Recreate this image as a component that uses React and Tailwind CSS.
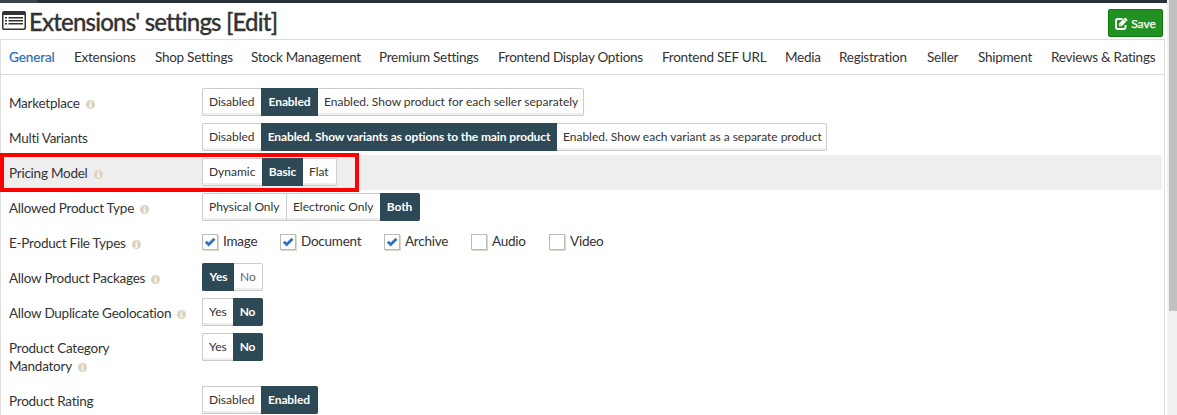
import React from 'react';

const tabs = [
  ['General', 'w-[65px]'],
  ['Extensions', 'w-[81px]'],
  ['Shop Settings', 'w-[96px]'],
  ['Stock Management', 'w-[128px]'],
  ['Premium Settings', 'w-[119px]'],
  ['Frontend Display Options', 'w-[164px]'],
  ['Frontend SEF URL', 'w-[123px]'],
  ['Media', 'w-[54px]'],
  ['Registration', 'w-[88px]'],
  ['Seller', 'w-[51px]'],
  ['Shipment', 'w-[73px]'],
  ['Reviews & Ratings', 'w-[106px]'],
];

const rows = [
  { label: 'Marketplace', info: true, options: [['Disabled', 'w-[59px]'], ['Enabled', 'w-[57px]', true], ['Enabled. Show product for each seller separately', 'w-[266px]']] },
  { label: 'Multi Variants', options: [['Disabled', 'w-[59px]'], ['Enabled. Show variants as options to the main product', 'w-[296px]', true], ['Enabled. Show each variant as a separate product', 'w-[270px]']] },
  { label: 'Pricing Model', info: true, marked: true, options: [['Dynamic', 'w-[60px]'], ['Basic', 'w-[41px]', true], ['Flat', 'w-[34px]']] },
  { label: 'Allowed Product Type', info: true, options: [['Physical Only', 'w-[85px]'], ['Electronic Only', 'w-[93px]'], ['Both', 'w-[40px]', true]] },
  { label: 'E-Product File Types', info: true, checks: [['Image', true, 'w-[78px]'], ['Document', true, 'w-[104px]'], ['Archive', true, 'w-[87px]'], ['Audio', false, 'w-[78px]'], ['Video', false, 'w-[78px]']] },
  { label: 'Allow Product Packages', info: true, options: [['Yes', 'w-[32px]', true], ['No', 'w-[29px]', false, 'text-[#666]']] },
  { label: 'Allow Duplicate Geolocation', info: true, options: [['Yes', 'w-[31px]'], ['No', 'w-[30px]', true]] },
  { label: 'Product Category Mandatory', info: true, tall: true, options: [['Yes', 'w-[31px]'], ['No', 'w-[30px]', true]] },
  { label: 'Product Rating', options: [['Disabled', 'w-[59px]'], ['Enabled', 'w-[57px]', true]] },
];

function ListIcon() {
  return (
    <svg className="h-[19px] w-6 shrink-0" viewBox="0 0 24 19" fill="#333">
      <path fillRule="evenodd" d="M2 0H22Q24 0 24 2V17Q24 19 22 19H2Q0 19 0 17V2Q0 0 2 0ZM1.5 4V16.5Q1.5 17.5 2.5 17.5H21.5Q22.5 17.5 22.5 16.5V4Z" />
      <path d="M3 6h2v1.500H3zM3 9h2v1.500H3zM3 12h2v1.500H3zM6.500 6H21v1.500H6.500zM6.500 9H21v1.500H6.500zM6.500 12H21v1.500H6.500z" />
    </svg>
  );
}

function InfoIcon() {
  return (
    <svg className="mb-[-1px] ml-[6px] inline h-[9px] w-[9px] align-baseline" viewBox="0 0 9 9">
      <circle cx="4.500" cy="4.500" r="4.500" fill="#dcd2bd" />
      <path d="M3.800 1.300h1.500v1.400H3.800zM3.200 3.500h2.100v2.900h.6v1H3.200v-1h.6V4.500h-.6z" fill="#fff" />
    </svg>
  );
}

function EditIcon() {
  return (
    <svg className="h-[13px] w-[13px]" viewBox="0 0 13 13" fill="none" stroke="#fff">
      <path d="M7.500 2H2.500Q1 2 1 3.500V10.500Q1 12 2.500 12H9Q10.500 12 10.500 10.500V8" strokeWidth="1.900" />
      <path d="M4 9.300V6.600L10.200.6 12.700 3.100 6.700 9.300Z" fill="#fff" stroke="none" />
      <path d="M5 7.600l.9.800M9 2.800l1.700 1.600" stroke="#239023" strokeWidth=".7" />
    </svg>
  );
}

function Segments({ options }) {
  return (
    <div className="flex h-7">
      {options.map(([text, width, active, tone], i) => (
        <div
          key={text}
          className={`${width} flex h-7 items-center border-y pb-px text-[12px] whitespace-nowrap ${
            active
              ? 'justify-center border-[#2e4956] bg-[#2e4956] font-bold tracking-[-0.11px] text-white'
              : `border-[#ccc] bg-white pl-[6px] tracking-[-0.01px] shadow-[inset_0_-2px_0_#eee] ${tone || 'text-[#333]'}`
          } ${i === 0 ? 'rounded-l-[2px] border-l' : ''} ${
            i === options.length - 1 ? 'rounded-r-[2px] border-r' : !active && !options[i + 1][2] ? 'border-r' : ''
          }`}
        >
          {text}
        </div>
      ))}
    </div>
  );
}

function Checks({ items }) {
  return (
    <div className="flex pt-[5px]">
      {items.map(([text, on, width]) => (
        <div key={text} className={`${width} flex h-[18px] items-start`}>
          <div className="mt-[1px] h-4 w-4 shrink-0 border border-[#bbb] bg-white shadow-[1px_1px_0_#ddd9c8]">
            {on && (
              <svg viewBox="0 0 14 14" className="h-[14px] w-[14px]" fill="none" stroke="#2d73c5" strokeWidth="2.800">
                <path d="M2.800 6.800L5.700 9.600 11.500 3.800" />
              </svg>
            )}
          </div>
          <span className="ml-[5px] text-[13.5px] leading-[16px] tracking-[-0.24px]">{text}</span>
        </div>
      ))}
    </div>
  );
}

function Row({ row }) {
  return (
    <div className={`relative mr-[2px] flex pt-[3px] pl-2 ${row.tall ? 'h-[53px]' : 'h-[35px]'} ${row.marked ? 'bg-[#eee]' : ''}`}>
      <div className="w-[193px] shrink-0 pt-[6px] text-[13.5px] leading-[18px] tracking-[-0.24px]">
        <div className={row.tall ? 'w-[130px]' : 'whitespace-nowrap'}>
          {row.label}
          {row.info && <InfoIcon />}
        </div>
      </div>
      {row.options ? <Segments options={row.options} /> : <Checks items={row.checks} />}
      {row.marked && <div className="absolute top-[-2px] left-[-1px] h-[39px] w-[359px] border-4 border-[#f00]" />}
    </div>
  );
}

export default function App() {
  return (
    <div className="flex h-[415px] w-[1177px] overflow-hidden bg-white font-['Lato',sans-serif] text-[#333]">
      <div className="w-[1167px] shrink-0">
        <div className="flex h-[3px] bg-[#263238]">
          <div className="w-[38px] bg-[#39454b]" />
        </div>
        <header className="flex h-9 justify-between pr-1">
          <div className="flex pl-[2px]">
            <div className="pt-2"><ListIcon /></div>
            <h1 className="ml-[3px] pt-[4px] text-[24px] leading-[30px] font-medium tracking-[-0.82px] whitespace-nowrap [-webkit-text-stroke:0.3px_#333]">
              Extensions' settings [Edit]
            </h1>
          </div>
          <button className="mt-[6px] flex h-7 w-[55px] items-center justify-center gap-[3px] rounded-[2px] border border-[#087f08] bg-[#239023] text-[12px] text-white [-webkit-text-stroke:0.25px_#fff]">
            <EditIcon />
            <span className="pt-px">Save</span>
          </button>
        </header>
        <main className="h-[376px] w-[1165px] border border-b-0 border-[#ddd]">
          <nav className="flex h-[35px] border-b border-[#ddd] pl-2 text-[13.5px] tracking-[-0.26px]">
            {tabs.map(([text, width], i) => (
              <a key={text} className={`${width} shrink-0 pt-[7px] leading-5 whitespace-nowrap ${i === 0 ? 'text-[#2a6db5] tracking-[-0.1px] [-webkit-text-stroke:0.2px_#2a6db5]' : ''}`}>
                {text}
              </a>
            ))}
          </nav>
          <div className="pt-[10px]">
            {rows.map((row) => <Row key={row.label} row={row} />)}
          </div>
        </main>
      </div>
      <div className="w-[10px] bg-[#f1f1f1] pl-[2px]">
        <div className="h-[311px] bg-[#c1c1c1]" />
      </div>
    </div>
  );
}
